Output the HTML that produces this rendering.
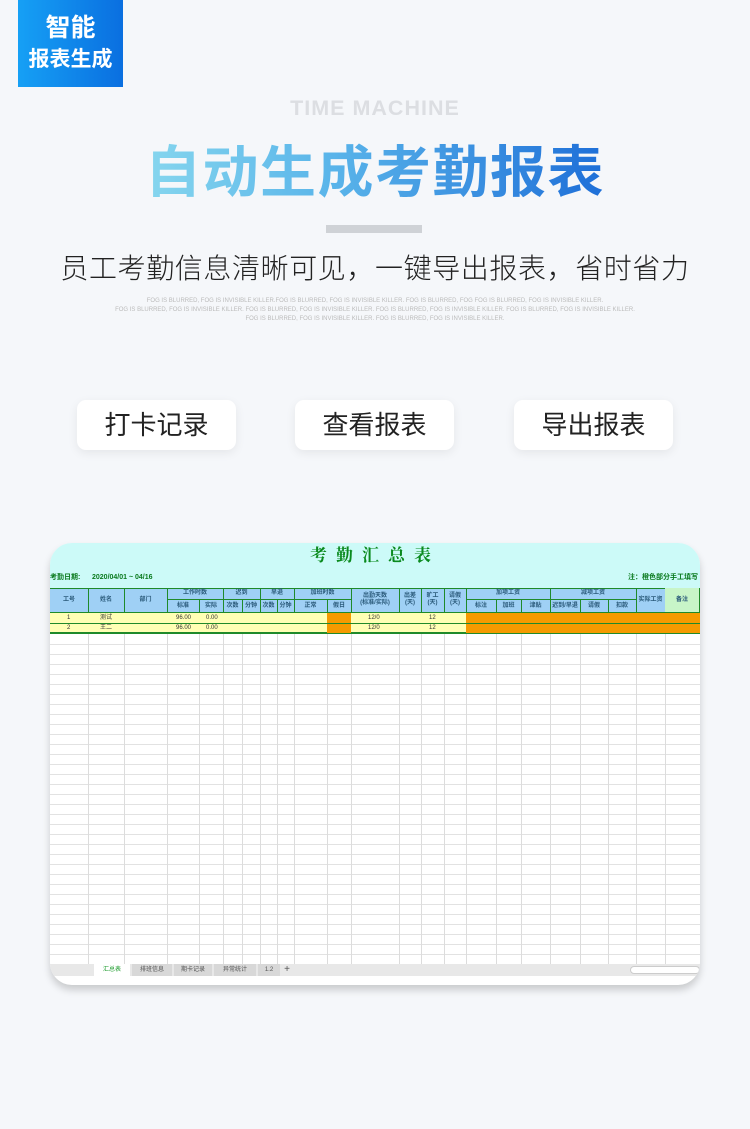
<!DOCTYPE html>
<html><head><meta charset="utf-8"><style>
*{margin:0;padding:0;box-sizing:border-box}
body{width:750px;height:1129px;background:#f5f7fa;position:relative;overflow:hidden;font-family:"Liberation Sans","Noto Sans CJK SC",sans-serif}
.badge{position:absolute;left:18px;top:0;width:105px;height:87px;background:linear-gradient(90deg,#16a0f5,#0a6fe0);color:#fff;font-weight:bold;text-align:center}
.badge .a{position:absolute;top:13px;left:0;right:0;font-size:25px;line-height:30px}
.badge .b{position:absolute;top:46px;left:0;right:0;font-size:21px;line-height:28px}
.tm{position:absolute;top:96px;left:0;right:0;text-align:center;font-size:21.5px;font-weight:bold;color:#dcdee2;letter-spacing:1px}
.title{position:absolute;top:138px;left:0;right:0;text-align:center;font-size:56px;font-weight:bold;line-height:70px;letter-spacing:1.5px}
.title span{background:linear-gradient(90deg,#86d6ee,#5ab5ea 40%,#1e6fd8);-webkit-background-clip:text;background-clip:text;color:transparent}
.bar{position:absolute;left:326px;top:225px;width:96px;height:8px;background:#cfd2d6}
.sub{position:absolute;top:250px;left:0;right:0;text-align:center;font-size:28px;color:#222;line-height:38px;font-weight:300;letter-spacing:0.6px}
.fog{position:absolute;top:297px;left:0;right:0;text-align:center;font-size:6px;line-height:9px;color:#bbb}
.btn{position:absolute;top:400px;width:159px;height:50px;background:#fff;border-radius:9px;box-shadow:0 3px 10px rgba(0,0,0,.07);text-align:center;font-size:26px;line-height:50px;color:#222}
.card{position:absolute;left:50px;top:543px;width:650px;height:442px;background:#fff;border-radius:22px;overflow:hidden;box-shadow:0 5px 8px rgba(0,0,0,.18)}
.hd{position:absolute;left:0;top:0;width:650px;height:45px;background:#ccfaf8}
.ttl{position:absolute;left:0;right:0;top:0;text-align:center;font-size:17px;color:#0a8a1e;letter-spacing:9px;line-height:24px;font-family:"Liberation Serif","Noto Serif CJK SC",serif;font-weight:bold}
.sm{position:absolute;font-size:7px;color:#0a7a1e;font-weight:bold;white-space:nowrap}
.d{position:absolute;font-size:6px;color:#333;white-space:nowrap;line-height:10px}
.grid{position:absolute;left:0;top:92px;width:650px;height:330px;background:repeating-linear-gradient(180deg,transparent 0 9px,#e2e2e2 9px 10px)}
.c{position:absolute;font-size:6px;color:#2a5a7a;text-align:center;font-weight:bold;display:flex;align-items:center;justify-content:center;line-height:7px;border-right:1px solid #1f8a2a;border-bottom:1px solid #1f8a2a}
.v{position:absolute;top:45px;width:1px;height:376px;background:#dcdcdc}
.tabs{position:absolute;left:0;top:421px;width:650px;height:12px;background:#e8e8e8;font-size:6px;color:#555}
.tabs span{position:absolute;top:0;height:12px;line-height:12px;text-align:center}
</style></head><body>
<div class="badge"><div class="a">智能</div><div class="b">报表生成</div></div>
<div class="tm">TIME MACHINE</div>
<div class="title"><span>自动生成考勤报表</span></div>
<div class="bar"></div>
<div class="sub">员工考勤信息清晰可见，一键导出报表，省时省力</div>
<div class="fog">FOG IS BLURRED, FOG IS INVISIBLE KILLER.FOG IS BLURRED, FOG IS INVISIBLE KILLER. FOG IS BLURRED, FOG FOG IS BLURRED, FOG IS INVISIBLE KILLER.<br>FOG IS BLURRED, FOG IS INVISIBLE KILLER. FOG IS BLURRED, FOG IS INVISIBLE KILLER. FOG IS BLURRED, FOG IS INVISIBLE KILLER. FOG IS BLURRED, FOG IS INVISIBLE KILLER.<br>FOG IS BLURRED, FOG IS INVISIBLE KILLER. FOG IS BLURRED, FOG IS INVISIBLE KILLER.</div>
<div class="btn" style="left:77px">打卡记录</div>
<div class="btn" style="left:295px">查看报表</div>
<div class="btn" style="left:514px">导出报表</div>

<div class="card">
<div class="hd"></div>
<div class="ttl" style="top:1px">考勤汇总表</div>
<div class="sm" style="left:0;top:29px">考勤日期:&nbsp;&nbsp;&nbsp;&nbsp;&nbsp;&nbsp;2020/04/01 ~ 04/16</div>
<div class="sm" style="left:578px;top:29px">注：橙色部分手工填写</div>
<div class="grid"></div>
<div class="v" style="left:38px"></div><div class="v" style="left:74px"></div><div class="v" style="left:117px"></div><div class="v" style="left:149px"></div><div class="v" style="left:173px"></div><div class="v" style="left:192px"></div><div class="v" style="left:210px"></div><div class="v" style="left:227px"></div><div class="v" style="left:244px"></div><div class="v" style="left:277px"></div><div class="v" style="left:301px"></div><div class="v" style="left:349px"></div><div class="v" style="left:371px"></div><div class="v" style="left:394px"></div><div class="v" style="left:416px"></div><div class="v" style="left:446px"></div><div class="v" style="left:471px"></div><div class="v" style="left:500px"></div><div class="v" style="left:530px"></div><div class="v" style="left:558px"></div><div class="v" style="left:586px"></div><div class="v" style="left:615px"></div>
<div style="position:absolute;left:0;top:45px;width:650px;height:25px;background:#9fd0f5;border-top:1px solid #1f8a2a"></div>
<div class="c" style="left:0;top:45px;width:39px;height:25px">工号</div>
<div class="c" style="left:38px;top:45px;width:37px;height:25px">姓名</div>
<div class="c" style="left:74px;top:45px;width:44px;height:25px">部门</div>
<div class="c" style="left:117px;top:45px;width:57px;height:12px">工作时数</div>
<div class="c" style="left:117px;top:57px;width:33px;height:13px">标准</div>
<div class="c" style="left:149px;top:57px;width:25px;height:13px">实际</div>
<div class="c" style="left:173px;top:45px;width:38px;height:12px">迟到</div>
<div class="c" style="left:173px;top:57px;width:20px;height:13px">次数</div>
<div class="c" style="left:192px;top:57px;width:19px;height:13px">分钟</div>
<div class="c" style="left:210px;top:45px;width:35px;height:12px">早退</div>
<div class="c" style="left:210px;top:57px;width:18px;height:13px">次数</div>
<div class="c" style="left:227px;top:57px;width:18px;height:13px">分钟</div>
<div class="c" style="left:244px;top:45px;width:58px;height:12px">加班时数</div>
<div class="c" style="left:244px;top:57px;width:34px;height:13px">正常</div>
<div class="c" style="left:277px;top:57px;width:25px;height:13px">假日</div>
<div class="c" style="left:301px;top:45px;width:49px;height:25px">出勤天数<br>(标准/实际)</div>
<div class="c" style="left:349px;top:45px;width:23px;height:25px">出差<br>(天)</div>
<div class="c" style="left:371px;top:45px;width:24px;height:25px">旷工<br>(天)</div>
<div class="c" style="left:394px;top:45px;width:23px;height:25px">请假<br>(天)</div>
<div class="c" style="left:416px;top:45px;width:85px;height:12px">加项工资</div>
<div class="c" style="left:416px;top:57px;width:31px;height:13px">标注</div>
<div class="c" style="left:446px;top:57px;width:26px;height:13px">加班</div>
<div class="c" style="left:471px;top:57px;width:30px;height:13px">津贴</div>
<div class="c" style="left:500px;top:45px;width:87px;height:12px">减项工资</div>
<div class="c" style="left:500px;top:57px;width:31px;height:13px">迟到/早退</div>
<div class="c" style="left:530px;top:57px;width:29px;height:13px">请假</div>
<div class="c" style="left:558px;top:57px;width:29px;height:13px">扣款</div>
<div class="c" style="left:586px;top:45px;width:30px;height:25px">实际工资</div>
<div class="c" style="left:615px;top:45px;width:35px;height:25px;background:#c8f5c8">备注</div>
<div style="position:absolute;left:0;top:70px;width:650px;height:21px;background:#ffffb4;border-bottom:2px solid #1f8a2a"></div>
<div style="position:absolute;left:277px;top:70px;width:24px;height:20px;background:#f59a00"></div>
<div style="position:absolute;left:416px;top:70px;width:234px;height:20px;background:#f59a00"></div>
<div style="position:absolute;left:0;top:80px;width:650px;height:1px;background:#1f8a2a"></div>
<div class="d" style="left:17px;top:70px">1</div>
<div class="d" style="left:17px;top:80px">2</div>
<div class="d" style="left:50px;top:70px">测试</div>
<div class="d" style="left:50px;top:80px">王二</div>
<div class="d" style="left:126px;top:70px">96.00</div>
<div class="d" style="left:126px;top:80px">96.00</div>
<div class="d" style="left:156px;top:70px">0.00</div>
<div class="d" style="left:156px;top:80px">0.00</div>
<div class="d" style="left:318px;top:70px">12/0</div>
<div class="d" style="left:318px;top:80px">12/0</div>
<div class="d" style="left:379px;top:70px">12</div>
<div class="d" style="left:379px;top:80px">12</div>
<div class="tabs">
<span style="left:44px;width:36px;background:#fff;color:#1a9a2a">汇总表</span>
<span style="left:82px;width:40px;background:#d8d8d8">排班信息</span>
<span style="left:124px;width:38px;background:#d8d8d8">期卡记录</span>
<span style="left:164px;width:42px;background:#d8d8d8">异常统计</span>
<span style="left:208px;width:22px;background:#d8d8d8">1.2</span>
<span style="left:232px;width:10px;font-size:10px">+</span>
<span style="left:580px;width:70px;border:1px solid #ccc;border-radius:6px;height:8px;top:2px;background:#fff"></span>
</div>
</div>
</body></html>
